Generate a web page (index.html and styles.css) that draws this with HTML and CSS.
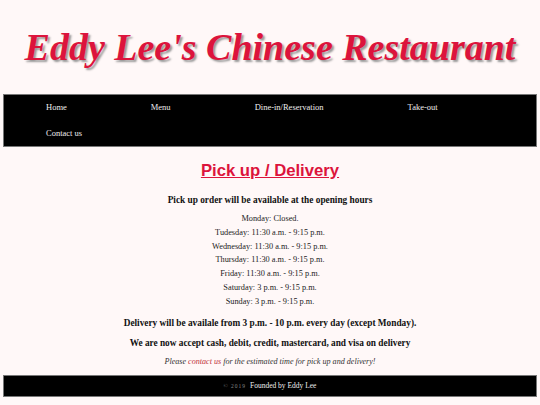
FILE: index.html
```
<!DOCTYPE html>
<html>
<head>
<meta charset="utf-8">
<link rel="stylesheet" href="styles.css">
</head>
<body>
<header class="banner">
  <h1 class="title">Eddy Lee's Chinese Restaurant</h1>
</header>
<nav class="nav">
  <ul class="nav-list">
    <li class="nav-item"><a href="#">Home</a></li>
    <li class="nav-item"><a href="#">Menu</a></li>
    <li class="nav-item"><a href="#">Dine-in/Reservation</a></li>
    <li class="nav-item"><a href="#">Take-out</a></li>
    <li class="nav-item"><a href="#">Contact us</a></li>
  </ul>
</nav>
<main class="content">
  <h2 class="heading">Pick up / Delivery</h2>
  <p class="lead">Pick up order will be available at the opening hours</p>
  <ul class="hours">
    <li>Monday: Closed.</li>
    <li>Tudesday: 11:30 a.m. - 9:15 p.m.</li>
    <li>Wednesday: 11:30 a.m. - 9:15 p.m.</li>
    <li>Thursday: 11:30 a.m. - 9:15 p.m.</li>
    <li>Friday: 11:30 a.m. - 9:15 p.m.</li>
    <li>Saturday: 3 p.m. - 9:15 p.m.</li>
    <li>Sunday: 3 p.m. - 9:15 p.m.</li>
  </ul>
  <p class="note">Delivery will be availale from 3 p.m. - 10 p.m. every day (except Monday).</p>
  <p class="note">We are now accept cash, debit, credit, mastercard, and visa on delivery</p>
  <p class="contact">Please <a href="#">contact us</a> for the estimated time for pick up and delivery!</p>
</main>
<footer class="footer">
  <span class="copy">© 2019</span> Founded by Eddy Lee
</footer>
</body>
</html>
```

FILE: styles.css
```
html, body {
  margin: 0;
  padding: 0;
  background: #fff8f8;
}
body {
  font-family: "Liberation Serif", "Times New Roman", serif;
  color: #111;
  padding: 0 3px;
}
.banner {
  height: 94px;
  display: flex;
  align-items: center;
  justify-content: center;
}
.title {
  margin: 0;
  font-size: 38px;
  font-style: italic;
  font-weight: bold;
  color: #dc143c;
  text-shadow: 2px 2px 2px #999;
}
.nav {
  background: #000;
  border: 1px solid #777;
}
.nav-list {
  list-style: none;
  margin: 0;
  padding: 0;
  display: flex;
  flex-wrap: wrap;
}
.nav-item {
  padding: 0 42px;
  height: 25.5px;
  line-height: 25.5px;
  font-size: 8.5px;
}
.nav-item a {
  color: #eee;
  text-decoration: none;
}
.content {
  text-align: center;
  padding: 14px 0 7px;
}
.heading {
  margin: 0 0 13px;
  font-family: "Liberation Sans", Arial, sans-serif;
  font-size: 16.7px;
  line-height: 20px;
  font-weight: bold;
  color: #dc143c;
  text-decoration: underline;
}
.lead {
  margin: 0 0 6px;
  font-size: 9.3px;
  line-height: 12px;
  font-weight: bold;
}
.hours {
  list-style: none;
  margin: 0;
  padding: 0;
  font-size: 8.3px;
  line-height: 13.8px;
  color: #222;
}
.note {
  margin: 8px 0 0;
  font-size: 9.3px;
  line-height: 12px;
  font-weight: bold;
}
.contact {
  margin: 7px 0 0;
  font-size: 8.1px;
  line-height: 12px;
  font-style: italic;
  color: #333;
}
.contact a {
  color: #c0303a;
  text-decoration: none;
}
.footer {
  background: #000;
  border: 1px solid #777;
  color: #eee;
  text-align: center;
  font-size: 7.5px;
  height: 20px;
  line-height: 20px;
}
.copy {
  color: #888;
  font-size: 5.5px;
  letter-spacing: 1px;
  margin-right: 2px;
}
```
